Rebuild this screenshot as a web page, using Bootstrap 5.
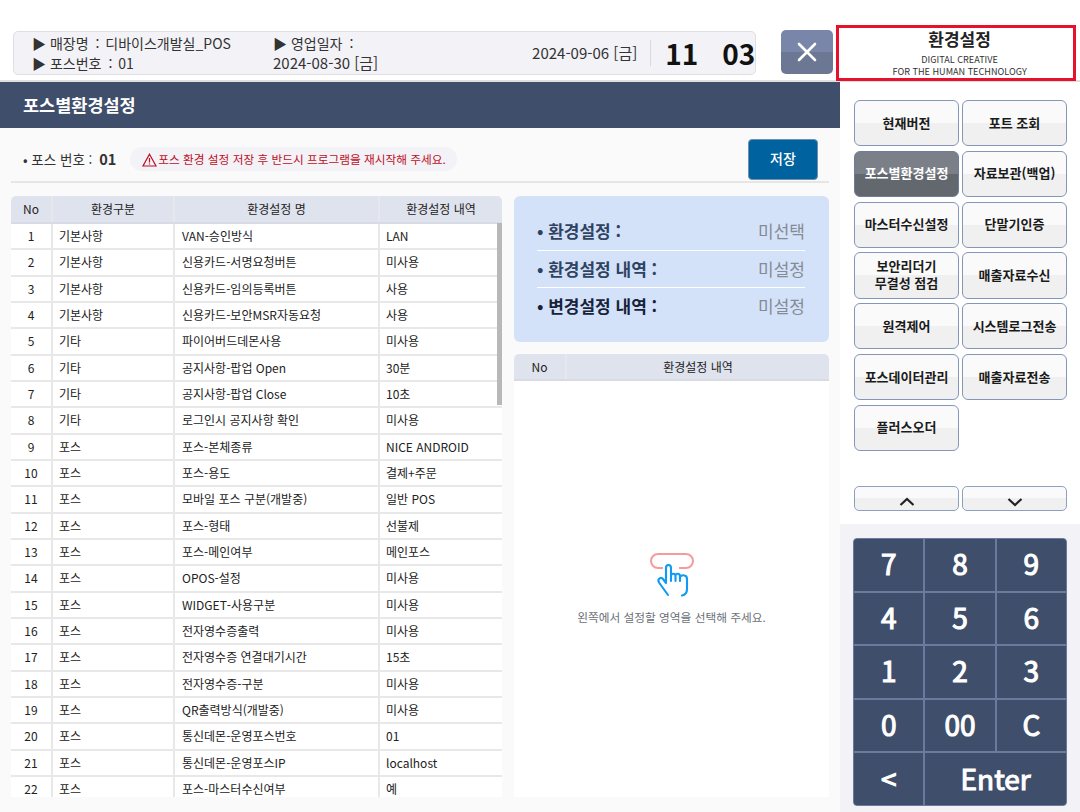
<!DOCTYPE html>
<html lang="ko">
<head>
<meta charset="utf-8">
<title>환경설정</title>
<link href="https://cdn.jsdelivr.net/npm/bootstrap@5.3.0/dist/css/bootstrap.min.css" rel="stylesheet">
<style>
html,body{height:812px;overflow:hidden;}
body{font-family:"Noto Sans CJK KR","Noto Sans",sans-serif;color:#222;background:#fff;}
.pg-top{height:82px;border-bottom:2px solid #dfdfdf;padding:25px 4px 0 13px;}
.info-box{width:744px;height:44px;margin-top:6px;background:#f2f2f7;border:1px solid #dedee3;border-radius:5px;padding:0 0 0 18px;font-size:14px;line-height:20px;color:#333;}
.info-a{width:241px;}
.info-b{width:150px;}
.sep-colon{margin:0 2px 0 3px;}
.date-txt{font-size:15px;}
.info-date{margin-left:auto;font-size:15px;padding-right:13px;border-right:1px solid #d9d9de;height:26px;line-height:26px;}
.info-time{width:104px;padding-left:14px;font-size:28px;font-weight:700;color:#111;line-height:44px;gap:24px;}
.close-btn{width:52px;height:44px;margin:5px 0 0 25px;padding:0;border:0;border-radius:5px;background:linear-gradient(#7986a9 50%,#6b7793 50%);}
.sys-title{width:240px;height:56px;margin-left:3px;border:3px solid #e8112d;padding-left:7px;text-align:center;line-height:1;overflow:hidden;color:#333;}
.sys-title b{display:block;font-size:17px;font-weight:700;line-height:22px;margin-top:0;color:#222;}
.sys-title span{display:block;font-size:9.1px;line-height:12px;}
.sys-title span.first{margin-top:3px;}
.pg-body{height:730px;}
.main-col{width:840px;background:#fafafa;}
.main-head{height:46px;background:#3f4e6b;color:#fff;font-size:17.5px;font-weight:700;line-height:45px;padding-left:23px;}
.save-row{height:55px;margin:0 11px;padding:11px 11px 0 12px;border-bottom:2px solid #e6e6e6;}
.pos-no{font-size:13.5px;line-height:40px;color:#333;height:40px;}
.pos-no b{margin-left:3px;font-size:14.5px;}
.warn-pill{margin:8px 0 0 14px;height:24px;line-height:24px;border-radius:12px;background:#f2f2f7;color:#c00d24;font-size:11.7px;padding:0 11px 0 12px;}
.warn-pill svg{vertical-align:-3px;margin-right:1px;}
.save-btn{width:70px;height:41px;margin-left:auto;background:#00629f;color:#fff;font-size:14px;font-weight:500;border:1px solid #6d8fae;border-radius:4px;padding:0 0 3px;}
.tbl-wrap{width:491px;height:601px;margin:13px 12px 0 11px;overflow:hidden;position:relative;background:#fff;border-radius:5px 5px 0 0;}
.set-tbl{table-layout:fixed;width:491px;border-collapse:collapse;font-size:12px;margin:0;}
.set-tbl th{height:27px;padding:0;background:#dfe3ee;font-weight:400;text-align:center;border-right:2px solid #e7e8ec;border-bottom:2px solid #d8dbe3;color:#222;}
.set-tbl td{height:26.33px;padding:0 0 0 6px;line-height:1;border-right:2px solid #e8e8e8;border-bottom:2px solid #e8e8e8;white-space:nowrap;overflow:hidden;color:#222;}
.set-tbl td:first-child{padding:0;text-align:center;}
.set-tbl th:last-child,.set-tbl td:last-child{border-right:0;}
.set-tbl td:nth-child(3){padding-left:7px;}
.scroll-thumb{position:absolute;right:0;top:27px;width:5px;height:182px;background:#b8b8b8;}
.side-pane{width:315px;margin-top:13px;}
.blue-box{height:146px;background:#d3e2f8;border-radius:6px;padding:17px 24px 0 23px;}
.blue-row{height:37.5px;line-height:36px;font-size:17px;font-weight:700;color:#2f4261;border-bottom:1.5px solid #fff;}
.blue-row:last-child{border-bottom:0;color:#17233a;}
.blue-row em{font-style:normal;font-weight:400;color:#858b96;}
.detail-pane{height:443px;margin-top:12px;background:#fff;border-radius:5px 5px 0 0;overflow:hidden;}
.detail-head{height:27px;background:#dfe3ee;border-bottom:2px solid #d8dbe3;font-size:12px;line-height:25px;text-align:center;color:#222;}
.detail-head div:first-child{width:53px;border-right:2px solid #e7e8ec;}
.empty-msg{font-size:11.7px;color:#6b7078;margin-top:171px;}
.empty-msg svg{display:block;margin:0 0 10px 136px;}
.right-col{width:240px;background:#fff;}
.fn-area{height:442px;padding:18px 14px 0;}
.fn-grid{display:grid;grid-template-columns:105px 105px;column-gap:3px;grid-auto-rows:46.2px;row-gap:4.6px;}
.fn-btn{border:1.5px solid #8496ba;border-radius:6px;background:linear-gradient(#fafafa 50%,#f0f0f0 50%);font-size:13px;font-weight:700;line-height:17px;color:#1b1b1b;padding:0 0 2px;}
.fn-btn.on{background:linear-gradient(#7b7f88 50%,#63686f 50%);color:#fff;border-color:#6f7e97;}
.arrow-row{display:grid;grid-template-columns:105px 105px;column-gap:3px;margin-top:35px;}
.arrow-btn{height:25px;border:1.5px solid #8ea0c2;border-radius:5px;background:linear-gradient(#fafafa 50%,#f0f0f0 50%);padding:8px 0 0;line-height:0;}
.key-area{height:288px;background:#f2f2f7;padding:14px 13px 0;}
.key-grid{display:grid;grid-template-columns:repeat(3,1fr);grid-auto-rows:51.6px;width:214px;border:1px solid #6b7a9e;border-radius:4px;overflow:hidden;background:#6b7a9e;gap:2px;}
.key-btn{border:0;background:#3f4e6b;color:#fff;font-size:28px;font-weight:400;-webkit-text-stroke:1.1px #fff;padding:0 0 3px;line-height:1;border-radius:0;}
.key-wide{grid-column:span 2;}
</style>
</head>
<body>
<header class="pg-top d-flex align-items-start">
  <div class="info-box d-flex align-items-center">
    <div class="info-a"><div>▶ 매장명 <span class="sep-colon">:</span> 디바이스개발실_POS</div><div>▶ 포스번호 <span class="sep-colon">:</span> 01</div></div>
    <div class="info-b"><div>▶ 영업일자 <span class="sep-colon">:</span></div><div class="date-txt">2024-08-30 [금]</div></div>
    <div class="info-date">2024-09-06 [금]</div>
    <div class="info-time d-flex"><span>11</span><span>03</span></div>
  </div>
  <button class="close-btn d-flex align-items-center justify-content-center" aria-label="닫기">
    <svg width="20" height="20" viewBox="0 0 20 20"><path d="M2 2 L18 18 M18 2 L2 18" stroke="#fff" stroke-width="2.6" stroke-linecap="round"/></svg>
  </button>
  <div class="sys-title">
    <b>환경설정</b>
    <span class="first">DIGITAL CREATIVE</span>
    <span>FOR THE HUMAN TECHNOLOGY</span>
  </div>
</header>
<div class="pg-body d-flex">
  <main class="main-col">
    <div class="main-head">포스별환경설정</div>
    <div class="save-row d-flex align-items-start">
      <div class="pos-no">• 포스 번호 : <b>01</b></div>
      <div class="warn-pill"><svg width="15" height="14" viewBox="0 0 15 14"><path d="M7.5 1.2 L14 13 H1 Z" fill="none" stroke="#c00d24" stroke-width="1.2"/><path d="M7.5 5 V9.4 M7.5 10.4 V11.6" stroke="#c00d24" stroke-width="1.2"/></svg>포스 환경 설정 저장 후 반드시 프로그램을 재시작해 주세요.</div>
      <button class="save-btn">저장</button>
    </div>
    <div class="d-flex">
      <div class="tbl-wrap">
        <table class="set-tbl">
          <colgroup><col style="width:41px"><col style="width:122px"><col style="width:205px"><col></colgroup>
          <thead><tr><th>No</th><th>환경구분</th><th>환경설정 명</th><th>환경설정 내역</th></tr></thead>
          <tbody>
            <tr><td>1</td><td>기본사항</td><td>VAN-승인방식</td><td>LAN</td></tr>
            <tr><td>2</td><td>기본사항</td><td>신용카드-서명요청버튼</td><td>미사용</td></tr>
            <tr><td>3</td><td>기본사항</td><td>신용카드-임의등록버튼</td><td>사용</td></tr>
            <tr><td>4</td><td>기본사항</td><td>신용카드-보안MSR자동요청</td><td>사용</td></tr>
            <tr><td>5</td><td>기타</td><td>파이어버드데몬사용</td><td>미사용</td></tr>
            <tr><td>6</td><td>기타</td><td>공지사항-팝업 Open</td><td>30분</td></tr>
            <tr><td>7</td><td>기타</td><td>공지사항-팝업 Close</td><td>10초</td></tr>
            <tr><td>8</td><td>기타</td><td>로그인시 공지사항 확인</td><td>미사용</td></tr>
            <tr><td>9</td><td>포스</td><td>포스-본체종류</td><td>NICE ANDROID</td></tr>
            <tr><td>10</td><td>포스</td><td>포스-용도</td><td>결제+주문</td></tr>
            <tr><td>11</td><td>포스</td><td>모바일 포스 구분(개발중)</td><td>일반 POS</td></tr>
            <tr><td>12</td><td>포스</td><td>포스-형태</td><td>선불제</td></tr>
            <tr><td>13</td><td>포스</td><td>포스-메인여부</td><td>메인포스</td></tr>
            <tr><td>14</td><td>포스</td><td>OPOS-설정</td><td>미사용</td></tr>
            <tr><td>15</td><td>포스</td><td>WIDGET-사용구분</td><td>미사용</td></tr>
            <tr><td>16</td><td>포스</td><td>전자영수증출력</td><td>미사용</td></tr>
            <tr><td>17</td><td>포스</td><td>전자영수증 연결대기시간</td><td>15초</td></tr>
            <tr><td>18</td><td>포스</td><td>전자영수증-구분</td><td>미사용</td></tr>
            <tr><td>19</td><td>포스</td><td>QR출력방식(개발중)</td><td>미사용</td></tr>
            <tr><td>20</td><td>포스</td><td>통신데몬-운영포스번호</td><td>01</td></tr>
            <tr><td>21</td><td>포스</td><td>통신데몬-운영포스IP</td><td>localhost</td></tr>
            <tr><td>22</td><td>포스</td><td>포스-마스터수신여부</td><td>예</td></tr>
          </tbody>
        </table>
        <div class="scroll-thumb"></div>
      </div>
      <div class="side-pane">
        <div class="blue-box">
          <div class="blue-row d-flex justify-content-between"><span>• 환경설정 :</span><em>미선택</em></div>
          <div class="blue-row d-flex justify-content-between"><span>• 환경설정 내역 :</span><em>미설정</em></div>
          <div class="blue-row d-flex justify-content-between"><span>• 변경설정 내역 :</span><em>미설정</em></div>
        </div>
        <div class="detail-pane">
          <div class="detail-head d-flex"><div>No</div><div class="flex-grow-1">환경설정 내역</div></div>
          <div class="empty-msg text-center">
            <svg width="46" height="46" viewBox="0 0 46 46">
              <path d="M13 16 H8 A7 7 0 0 1 8 2 H36 A7 7 0 0 1 36 16 H29" fill="none" stroke="#f79a9a" stroke-width="2"/>
              <path d="M16 31 L13 27 C11 24.500 7 27 9 30.500 L18 43 M16 31 V16 C16 12 21 12 21 16 V29 M21 24 C21 21 25.500 21 25.500 24 V29 M25.500 24 C25.500 21 30 21 30 24.500 V29 M30 25.500 C30 22.500 37 22 37 27 V37 C37 41 35 43 32 43.500" fill="none" stroke="#0f9bf2" stroke-width="2.100" stroke-linejoin="round" stroke-linecap="round"/>
            </svg>
            왼쪽에서 설정할 영역을 선택해 주세요.
          </div>
        </div>
      </div>
    </div>
  </main>
  <aside class="right-col">
    <div class="fn-area">
      <div class="fn-grid">
        <button class="fn-btn">현재버전</button>
        <button class="fn-btn">포트 조회</button>
        <button class="fn-btn on">포스별환경설정</button>
        <button class="fn-btn">자료보관(백업)</button>
        <button class="fn-btn">마스터수신설정</button>
        <button class="fn-btn">단말기인증</button>
        <button class="fn-btn">보안리더기<br>무결성 점검</button>
        <button class="fn-btn">매출자료수신</button>
        <button class="fn-btn">원격제어</button>
        <button class="fn-btn">시스템로그전송</button>
        <button class="fn-btn">포스데이터관리</button>
        <button class="fn-btn">매출자료전송</button>
        <button class="fn-btn">플러스오더</button>
      </div>
      <div class="arrow-row">
        <button class="arrow-btn" aria-label="위로"><svg width="16" height="10" viewBox="0 0 16 10"><path d="M1.500 8 L8 2 L14.500 8" fill="none" stroke="#222" stroke-width="2.200"/></svg></button>
        <button class="arrow-btn" aria-label="아래로"><svg width="16" height="10" viewBox="0 0 16 10"><path d="M1.500 2 L8 8 L14.500 2" fill="none" stroke="#222" stroke-width="2.200"/></svg></button>
      </div>
    </div>
    <div class="key-area">
      <div class="key-grid">
        <button class="key-btn">7</button><button class="key-btn">8</button><button class="key-btn">9</button>
        <button class="key-btn">4</button><button class="key-btn">5</button><button class="key-btn">6</button>
        <button class="key-btn">1</button><button class="key-btn">2</button><button class="key-btn">3</button>
        <button class="key-btn">0</button><button class="key-btn">00</button><button class="key-btn">C</button>
        <button class="key-btn">&lt;</button><button class="key-btn key-wide">Enter</button>
      </div>
    </div>
  </aside>
</div>
<script src="https://cdn.jsdelivr.net/npm/bootstrap@5.3.0/dist/js/bootstrap.bundle.min.js"></script>
</body>
</html>
